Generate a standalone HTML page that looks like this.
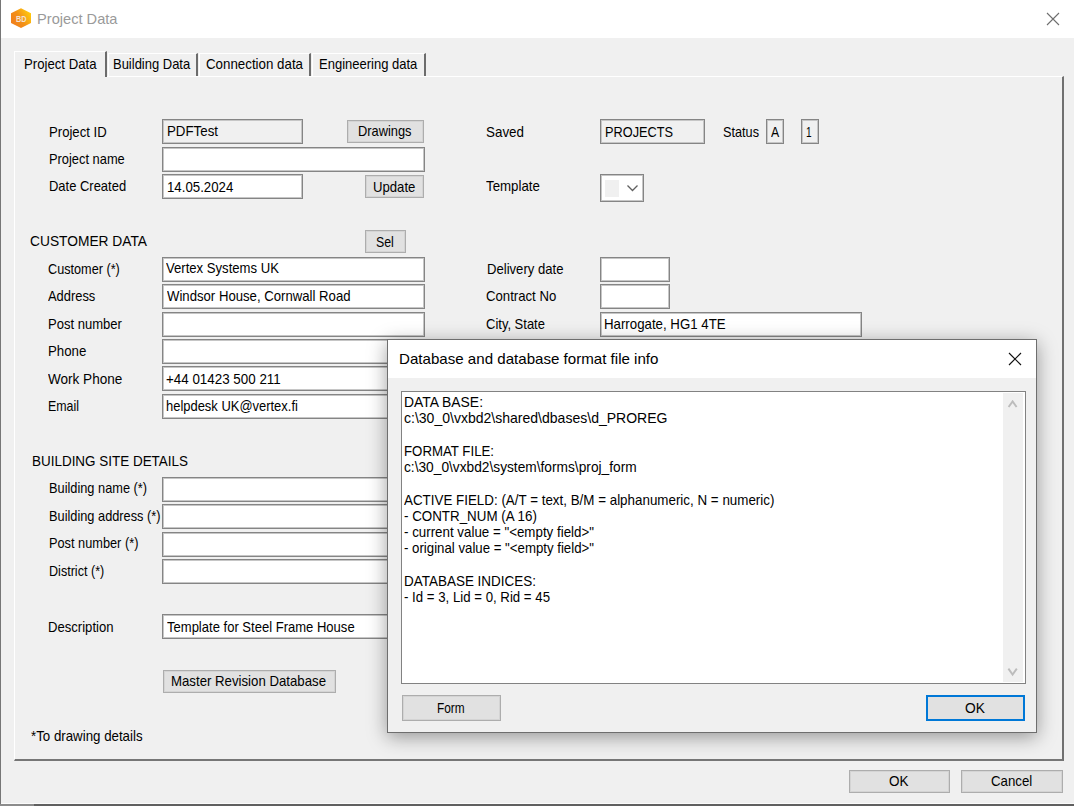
<!DOCTYPE html>
<html><head><meta charset='utf-8'><title>Project Data</title><style>
html,body{margin:0;padding:0}
body{width:1074px;height:806px;position:relative;overflow:hidden;background:#f0f0f0;font-family:'Liberation Sans',sans-serif}
div,span,svg{position:absolute;box-sizing:border-box}
.t{white-space:pre;line-height:16px;transform-origin:0 0;color:#000}
.tb{border:1px solid #858585;box-shadow:inset 0 0 0 1px #c6c6c6;background:#fff}
.ro{background:#f0f0f0}
.btn{border:1px solid #adadad;background:#e1e1e1;box-shadow:inset 0 0 0 1px #d4d4d4}

</style></head><body>
<!-- title bar -->
<div style="left:0;top:0;width:1074px;height:38px;background:#fff"></div>
<div style="left:0;top:0;width:1px;height:806px;background:#767676;z-index:20"></div>
<div style="left:1px;top:803px;width:1073px;height:1px;background:#fbfbfb;z-index:20"></div>
<div style="left:0;top:804px;width:1074px;height:2px;background:#606060;z-index:20"></div>
<div style="left:0;top:804px;width:34px;height:2px;background:#8c8c8c;z-index:21"></div>
<svg style="left:10px;top:7px" width="22" height="22" viewBox="0 0 22 22">
  <defs><linearGradient id="hg" x1="0.1" y1="0.8" x2="0.95" y2="0.25"><stop offset="0" stop-color="#f0801c"/><stop offset="0.45" stop-color="#f39018"/><stop offset="1" stop-color="#ffc90d"/></linearGradient></defs>
  <polygon points="11,1.2 21,6.2 21,16 11,21 1,16 1,6.2" fill="url(#hg)"/>
  <text x="11.2" y="14.9" text-anchor="middle" font-family="Liberation Sans" font-weight="bold" font-size="8.6" fill="#f3e3d3" textLength="10.5" lengthAdjust="spacingAndGlyphs">BD</text>
</svg>
<svg style="left:1046px;top:12px" width="14" height="14" viewBox="0 0 14 14"><path d="M1 1L13 13M13 1L1 13" stroke="#6e6e6e" stroke-width="1.1" fill="none"/></svg>

<!-- tab page panel -->
<div style="left:14px;top:76px;width:1050px;height:685px;border-top:1px solid #fff;border-left:1px solid #fff;border-right:2px solid #707070;border-bottom:2px solid #767676"></div>
<!-- tabs -->
<div style="left:108px;top:53px;width:90px;height:23px;border-top:1px solid #fff;border-left:1px solid #fff;border-right:2px solid #6c6c6c"></div>
<div style="left:199px;top:53px;width:112px;height:23px;border-top:1px solid #fff;border-left:1px solid #fff;border-right:2px solid #6c6c6c"></div>
<div style="left:312px;top:53px;width:114px;height:23px;border-top:1px solid #fff;border-left:1px solid #fff;border-right:2px solid #6c6c6c"></div>
<div style="left:14px;top:51px;width:93px;height:26px;background:#f0f0f0;border-top:1px solid #fff;border-left:1px solid #fff;border-right:2px solid #6c6c6c"></div>

<!-- left column boxes -->
<div class="tb ro" style="left:162px;top:119px;width:141px;height:25px"></div>
<div class="tb" style="left:162px;top:147px;width:263px;height:25px"></div>
<div class="tb" style="left:162px;top:174px;width:141px;height:25px"></div>
<div class="btn" style="left:347px;top:120px;width:77px;height:23px"></div>
<div class="btn" style="left:365px;top:175px;width:59px;height:23px"></div>
<div class="btn" style="left:365px;top:230px;width:41px;height:23px"></div>

<div class="tb" style="left:162px;top:257px;width:263px;height:25px"></div>
<div class="tb" style="left:162px;top:284px;width:263px;height:25px"></div>
<div class="tb" style="left:162px;top:312px;width:263px;height:25px"></div>
<div class="tb" style="left:162px;top:339px;width:263px;height:25px"></div>
<div class="tb" style="left:162px;top:366px;width:263px;height:25px"></div>
<div class="tb" style="left:162px;top:394px;width:263px;height:25px"></div>

<div class="tb" style="left:162px;top:477px;width:263px;height:25px"></div>
<div class="tb" style="left:162px;top:504px;width:263px;height:25px"></div>
<div class="tb" style="left:162px;top:532px;width:263px;height:25px"></div>
<div class="tb" style="left:162px;top:559px;width:263px;height:25px"></div>
<div class="tb" style="left:162px;top:614px;width:263px;height:25px"></div>
<div class="btn" style="left:163px;top:670px;width:173px;height:23px"></div>

<!-- right column boxes -->
<div class="tb ro" style="left:600px;top:119px;width:105px;height:25px"></div>
<div class="tb ro" style="left:766px;top:119px;width:18px;height:25px"></div>
<div class="tb ro" style="left:801px;top:119px;width:18px;height:25px"></div>
<div class="tb" style="left:600px;top:174px;width:44px;height:28px"></div>
<div style="left:605px;top:180px;width:14px;height:17px;background:#f0f0f0"></div>
<svg style="left:626px;top:184px" width="13" height="9" viewBox="0 0 13 9"><path d="M1.5 1.5L6.5 6.5L11.5 1.5" stroke="#606060" stroke-width="1.3" fill="none"/></svg>
<div class="tb" style="left:600px;top:257px;width:70px;height:25px"></div>
<div class="tb" style="left:600px;top:284px;width:70px;height:25px"></div>
<div class="tb" style="left:600px;top:312px;width:262px;height:25px"></div>

<!-- bottom buttons -->
<div class="btn" style="left:849px;top:770px;width:101px;height:23px"></div>
<div class="btn" style="left:961px;top:770px;width:102px;height:23px"></div>

<!-- dialog -->
<div style="left:387px;top:339px;width:650px;height:394px;background:#f0f0f0;border:1px solid #6e6e6e;box-shadow:0 4px 18px rgba(0,0,0,0.38);z-index:10">
  <div style="left:0;top:0;width:648px;height:38px;background:#fff"></div>
  <svg style="left:620px;top:12px" width="14" height="14" viewBox="0 0 14 14"><path d="M1 1L13 13M13 1L1 13" stroke="#111" stroke-width="1.15" fill="none"/></svg>
  <div style="left:13px;top:51px;width:625px;height:293px;background:#fff;border:1px solid #828282"></div>
  <div style="left:615px;top:53px;width:20px;height:289px;background:#f0f0f0"></div>
  <svg style="left:619px;top:60px" width="12" height="10" viewBox="0 0 12 10"><path d="M1.6 7.0L5.6 1.4L9.6 7.0" stroke="#bcbcbc" stroke-width="1.9" fill="none"/></svg>
  <svg style="left:619px;top:327px" width="12" height="10" viewBox="0 0 12 10"><path d="M1.4 1.6L5.6 7.6L9.8 1.6" stroke="#bcbcbc" stroke-width="1.9" fill="none"/></svg>
  <div class="btn" style="left:14px;top:355px;width:99px;height:26px"></div>
  <div style="left:538px;top:355px;width:99px;height:26px;background:#e1e1e1;border:2px solid #0078d7"></div>
</div>

<span class="t" style="left:36.8px;top:10.8px;font-size:15px;color:#9a9a9a;z-index:1;transform:scaleX(0.975)">Project Data</span>
<span class="t" style="left:24.0px;top:55.8px;font-size:15px;color:#000;z-index:1;transform:scaleX(0.878)">Project Data</span>
<span class="t" style="left:112.8px;top:55.8px;font-size:15px;color:#000;z-index:1;transform:scaleX(0.865)">Building Data</span>
<span class="t" style="left:205.7px;top:55.8px;font-size:15px;color:#000;z-index:1;transform:scaleX(0.888)">Connection data</span>
<span class="t" style="left:319.0px;top:55.8px;font-size:15px;color:#000;z-index:1;transform:scaleX(0.867)">Engineering data</span>
<span class="t" style="left:49.0px;top:123.7px;font-size:15px;color:#000;z-index:1;transform:scaleX(0.875)">Project ID</span>
<span class="t" style="left:49.2px;top:150.8px;font-size:15px;color:#000;z-index:1;transform:scaleX(0.857)">Project name</span>
<span class="t" style="left:49.2px;top:178.2px;font-size:15px;color:#000;z-index:1;transform:scaleX(0.864)">Date Created</span>
<span class="t" style="left:166.6px;top:123.4px;font-size:15px;color:#000;z-index:1;transform:scaleX(0.887)">PDFTest</span>
<span class="t" style="left:166.9px;top:178.5px;font-size:15px;color:#000;z-index:1;transform:scaleX(0.883)">14.05.2024</span>
<span class="t" style="left:357.9px;top:123.4px;font-size:15px;color:#000;z-index:1;transform:scaleX(0.856)">Drawings</span>
<span class="t" style="left:372.9px;top:178.6px;font-size:15px;color:#000;z-index:1;transform:scaleX(0.876)">Update</span>
<span class="t" style="left:30.4px;top:233.4px;font-size:15px;color:#000;z-index:1;transform:scaleX(0.918)">CUSTOMER DATA</span>
<span class="t" style="left:376.2px;top:233.8px;font-size:15px;color:#000;z-index:1;transform:scaleX(0.821)">Sel</span>
<span class="t" style="left:48.0px;top:261.2px;font-size:15px;color:#000;z-index:1;transform:scaleX(0.845)">Customer (*)</span>
<span class="t" style="left:48.0px;top:288.2px;font-size:15px;color:#000;z-index:1;transform:scaleX(0.860)">Address</span>
<span class="t" style="left:48.0px;top:315.7px;font-size:15px;color:#000;z-index:1;transform:scaleX(0.869)">Post number</span>
<span class="t" style="left:48.0px;top:343.0px;font-size:15px;color:#000;z-index:1;transform:scaleX(0.885)">Phone</span>
<span class="t" style="left:48.0px;top:370.5px;font-size:15px;color:#000;z-index:1;transform:scaleX(0.903)">Work Phone</span>
<span class="t" style="left:48.0px;top:398.0px;font-size:15px;color:#000;z-index:1;transform:scaleX(0.826)">Email</span>
<span class="t" style="left:165.9px;top:260.4px;font-size:15px;color:#000;z-index:1;transform:scaleX(0.874)">Vertex Systems UK</span>
<span class="t" style="left:166.5px;top:288.0px;font-size:15px;color:#000;z-index:1;transform:scaleX(0.877)">Windsor House, Cornwall Road</span>
<span class="t" style="left:166.0px;top:370.8px;font-size:15px;color:#000;z-index:1;transform:scaleX(0.892)">+44 01423 500 211</span>
<span class="t" style="left:166.0px;top:398.0px;font-size:15px;color:#000;z-index:1;transform:scaleX(0.863)">helpdesk UK@vertex.fi</span>
<span class="t" style="left:31.6px;top:453.3px;font-size:15px;color:#000;z-index:1;transform:scaleX(0.897)">BUILDING SITE DETAILS</span>
<span class="t" style="left:49.3px;top:480.2px;font-size:15px;color:#000;z-index:1;transform:scaleX(0.852)">Building name (*)</span>
<span class="t" style="left:49.3px;top:508.0px;font-size:15px;color:#000;z-index:1;transform:scaleX(0.852)">Building address (*)</span>
<span class="t" style="left:49.3px;top:535.4px;font-size:15px;color:#000;z-index:1;transform:scaleX(0.851)">Post number (*)</span>
<span class="t" style="left:49.3px;top:562.7px;font-size:15px;color:#000;z-index:1;transform:scaleX(0.839)">District (*)</span>
<span class="t" style="left:48.4px;top:618.7px;font-size:15px;color:#000;z-index:1;transform:scaleX(0.873)">Description</span>
<span class="t" style="left:167.3px;top:618.7px;font-size:15px;color:#000;z-index:1;transform:scaleX(0.869)">Template for Steel Frame House</span>
<span class="t" style="left:171.4px;top:673.4px;font-size:15px;color:#000;z-index:1;transform:scaleX(0.881)">Master Revision Database</span>
<span class="t" style="left:31.2px;top:727.9px;font-size:15px;color:#000;z-index:1;transform:scaleX(0.886)">*To drawing details</span>
<span class="t" style="left:486.3px;top:123.6px;font-size:15px;color:#000;z-index:1;transform:scaleX(0.893)">Saved</span>
<span class="t" style="left:604.5px;top:123.5px;font-size:15px;color:#000;z-index:1;transform:scaleX(0.850)">PROJECTS</span>
<span class="t" style="left:723.4px;top:123.5px;font-size:15px;color:#000;z-index:1;transform:scaleX(0.846)">Status</span>
<span class="t" style="left:770.6px;top:123.5px;font-size:15px;color:#000;z-index:1;transform:scaleX(0.819)">A</span>
<span class="t" style="left:805.6px;top:123.5px;font-size:15px;color:#000;z-index:1;transform:scaleX(0.671)">1</span>
<span class="t" style="left:486.3px;top:178.0px;font-size:15px;color:#000;z-index:1;transform:scaleX(0.885)">Template</span>
<span class="t" style="left:486.5px;top:261.1px;font-size:15px;color:#000;z-index:1;transform:scaleX(0.873)">Delivery date</span>
<span class="t" style="left:486.3px;top:288.1px;font-size:15px;color:#000;z-index:1;transform:scaleX(0.878)">Contract No</span>
<span class="t" style="left:486.3px;top:315.5px;font-size:15px;color:#000;z-index:1;transform:scaleX(0.866)">City, State</span>
<span class="t" style="left:604.4px;top:315.5px;font-size:15px;color:#000;z-index:1;transform:scaleX(0.884)">Harrogate, HG1 4TE</span>
<span class="t" style="left:889.3px;top:772.8px;font-size:15px;color:#000;z-index:1;transform:scaleX(0.899)">OK</span>
<span class="t" style="left:990.8px;top:773.3px;font-size:15px;color:#000;z-index:1;transform:scaleX(0.884)">Cancel</span>
<span class="t" style="left:399.1px;top:350.8px;font-size:15px;color:#000;z-index:11;transform:scaleX(1.007)">Database and database format file info</span>
<span class="t" style="left:404.3px;top:394.1px;font-size:15px;color:#000;z-index:11;transform:scaleX(0.926)">DATA BASE:</span>
<span class="t" style="left:404.3px;top:410.4px;font-size:15px;color:#000;z-index:11;transform:scaleX(0.935)">c:\30_0\vxbd2\shared\dbases\d_PROREG</span>
<span class="t" style="left:404.3px;top:442.9px;font-size:15px;color:#000;z-index:11;transform:scaleX(0.883)">FORMAT FILE:</span>
<span class="t" style="left:404.3px;top:459.1px;font-size:15px;color:#000;z-index:11;transform:scaleX(0.915)">c:\30_0\vxbd2\system\forms\proj_form</span>
<span class="t" style="left:404.3px;top:491.6px;font-size:15px;color:#000;z-index:11;transform:scaleX(0.892)">ACTIVE FIELD: (A/T = text, B/M = alphanumeric, N = numeric)</span>
<span class="t" style="left:404.3px;top:507.9px;font-size:15px;color:#000;z-index:11;transform:scaleX(0.891)">- CONTR_NUM (A 16)</span>
<span class="t" style="left:404.3px;top:524.1px;font-size:15px;color:#000;z-index:11;transform:scaleX(0.889)">- current value = "&lt;empty field&gt;"</span>
<span class="t" style="left:404.3px;top:540.4px;font-size:15px;color:#000;z-index:11;transform:scaleX(0.882)">- original value = "&lt;empty field&gt;"</span>
<span class="t" style="left:404.3px;top:572.9px;font-size:15px;color:#000;z-index:11;transform:scaleX(0.898)">DATABASE INDICES:</span>
<span class="t" style="left:404.3px;top:589.1px;font-size:15px;color:#000;z-index:11;transform:scaleX(0.882)">- Id = 3, Lid = 0, Rid = 45</span>
<span class="t" style="left:436.9px;top:700.1px;font-size:15px;color:#000;z-index:11;transform:scaleX(0.791)">Form</span>
<span class="t" style="left:965.2px;top:700.1px;font-size:15px;color:#000;z-index:11;transform:scaleX(0.918)">OK</span>
</body></html>
